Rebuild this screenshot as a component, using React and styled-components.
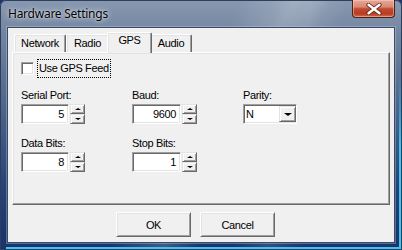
import React from "react";
import styled, { createGlobalStyle } from "styled-components";

const GlobalStyle = createGlobalStyle`
  html, body { margin: 0; padding: 0; background: #1b3366; }
  * { box-sizing: border-box; }
`;

const UI_FONT = `"Liberation Sans", Arial, sans-serif`;

/* ---------- window chrome ---------- */
const Window = styled.div`
  width: 402px;
  height: 250px;
  display: flex;
  flex-direction: column;
  position: relative;
  overflow: hidden;
  border-radius: 6px 6px 0 0;
  background:
    linear-gradient(118deg, transparent 45%, rgba(255,255,255,0.18) 55%, transparent 62%),
    linear-gradient(100deg, transparent 62%, rgba(255,255,255,0.12) 70%, transparent 78%),
    linear-gradient(180deg, #8898b0 0%, #71849f 14%, #4b6289 45%, #264277 75%, #1a336a 100%);
  box-shadow: inset 0 0 0 1px #2d3f5c;

  &::after {
    content: "";
    position: absolute;
    right: 1px;
    bottom: 1px;
    width: 2px;
    height: 70%;
    background: linear-gradient(180deg, transparent, #36c6f4 40%);
  }
  &::before {
    content: "";
    position: absolute;
    left: 6px;
    right: 1px;
    bottom: 1px;
    height: 2px;
    background: #36c6f4;
  }
`;

const TitleBar = styled.div`
  height: 27px;
  display: flex;
  align-items: flex-start;
  padding-left: 8px;
  flex-shrink: 0;
`;

const Title = styled.div`
  font-family: "Noto Sans", "Open Sans", sans-serif;
  font-size: 12px;
  letter-spacing: -0.25px;
  line-height: 16px;
  margin-top: 6px;
  color: #000;
  text-shadow: 0 0 6px rgba(255,255,255,0.9), 0 0 2px rgba(255,255,255,0.7);
`;

const CloseButton = styled.div`
  margin-left: auto;
  margin-right: 7px;
  width: 43px;
  height: 18px;
  border: 1px solid #4a2018;
  border-top: none;
  border-radius: 0 0 4px 4px;
  background: linear-gradient(180deg, #e6a797 0%, #d98a75 40%, #c24a2f 52%, #b83c22 80%, #cf6a4a 100%);
  box-shadow: inset 0 0 0 1px rgba(255,220,210,0.45);
  display: flex;
  align-items: center;
  justify-content: center;
`;

const Frame = styled.div`
  flex: 1;
  padding: 0 7px 7px 7px;
  display: flex;
`;

const Client = styled.div`
  flex: 1;
  background: #f0f0f0;
  border: 1px solid #3a4a62;
  box-shadow: 0 0 0 1px rgba(200,215,235,0.35);
  padding: 4px 4px 0 4px;
  display: flex;
  flex-direction: column;
  font-family: ${UI_FONT};
  font-size: 11px;
  letter-spacing: -0.35px;
  color: #000;
`;

/* ---------- tabs ---------- */
const TabStrip = styled.div`
  display: flex;
  align-items: flex-end;
  height: 20px;
  padding-left: 2px;
  position: relative;
  z-index: 1;
`;

const Tab = styled.div`
  width: ${(p) => p.$w}px;
  height: ${(p) => (p.$active ? 21 : 18)}px;
  margin: ${(p) => (p.$active ? "0 -2px -1px -2px" : "0")};
  background: #f0f0f0;
  border-left: 1px solid #fff;
  border-top: 1px solid #fff;
  border-right: 1px solid #696969;
  box-shadow: inset -1px 0 0 #a0a0a0, inset 1px 1px 0 #e3e3e3;
  border-radius: 2px 2px 0 0;
  text-align: center;
  line-height: ${(p) => (p.$active ? 15 : 16)}px;
  position: relative;
  z-index: ${(p) => (p.$active ? 2 : 1)};
`;

const Panel = styled.div`
  height: 153px;
  border-top: 1px solid #fff;
  border-left: 1px solid #fff;
  border-right: 1px solid #696969;
  border-bottom: 1px solid #696969;
  box-shadow: inset -1px -1px 0 #a0a0a0, inset 1px 1px 0 #e3e3e3;
  padding: 6px 8px 0 8px;
`;

/* ---------- controls ---------- */
const CheckRow = styled.div`
  display: flex;
  align-items: center;
  height: 18px;
  gap: 3px;
`;

const CheckBox = styled.div`
  width: 13px;
  height: 13px;
  background: #fff;
  border-top: 1px solid #a0a0a0;
  border-left: 1px solid #a0a0a0;
  border-right: 1px solid #fff;
  border-bottom: 1px solid #fff;
  box-shadow: inset 1px 1px 0 #696969, inset -1px -1px 0 #e3e3e3;
`;

const FocusLabel = styled.span`
  border: 1px dotted #000;
  padding: 2px 1px 2px 1px;
  line-height: 13px;
`;

const FieldGrid = styled.div`
  display: grid;
  grid-template-columns: 111px 111px auto;
  row-gap: 13px;
  margin-top: 12px;
`;

const Field = styled.div`
  display: flex;
  flex-direction: column;
`;

const Label = styled.div`
  height: 13px;
  line-height: 13px;
  margin-bottom: 2px;
`;

const SpinWrap = styled.div`
  display: flex;
  gap: 1px;
`;

const Sunken = styled.div`
  width: ${(p) => p.$w}px;
  height: 20px;
  background: #fff;
  border-top: 1px solid #a0a0a0;
  border-left: 1px solid #a0a0a0;
  border-right: 1px solid #fff;
  border-bottom: 1px solid #fff;
  box-shadow: inset 1px 1px 0 #696969, inset -1px -1px 0 #e3e3e3;
  display: flex;
  align-items: center;
  justify-content: ${(p) => (p.$right ? "flex-end" : "flex-start")};
  padding: ${(p) => (p.$right ? "0 4px 0 0" : "0 0 0 2px")};
  line-height: 13px;
`;

const SpinButtons = styled.div`
  width: 15px;
  height: 20px;
  display: flex;
  flex-direction: column;
`;

const Raised = styled.div`
  flex: 1;
  background: #f0f0f0;
  border-top: 1px solid #e3e3e3;
  border-left: 1px solid #e3e3e3;
  border-right: 1px solid #696969;
  border-bottom: 1px solid #696969;
  box-shadow: inset 1px 1px 0 #fff, inset -1px -1px 0 #a0a0a0;
  display: flex;
  align-items: center;
  justify-content: center;
`;

const Arrow = styled.div`
  width: 0;
  height: 0;
  border-left: ${(p) => p.$size}px solid transparent;
  border-right: ${(p) => p.$size}px solid transparent;
  ${(p) =>
    p.$up
      ? `border-bottom: ${p.$size - 1}px solid #000;`
      : `border-top: ${p.$size - 1}px solid #000;`}
`;

const DropButton = styled(Raised)`
  flex: none;
  width: 17px;
  height: 16px;
  margin-left: auto;
`;

/* ---------- dialog buttons ---------- */
const ButtonRow = styled.div`
  display: flex;
  justify-content: center;
  gap: 9px;
  margin-top: 7px;
  padding-right: 11px;
`;

const PushButton = styled.div`
  width: 75px;
  height: 25px;
  background: #f0f0f0;
  border-top: 1px solid #fff;
  border-left: 1px solid #fff;
  border-right: 1px solid #696969;
  border-bottom: 1px solid #696969;
  box-shadow: inset 1px 1px 0 #e3e3e3, inset -1px -1px 0 #a0a0a0;
  display: flex;
  align-items: center;
  justify-content: center;
`;

function SpinEdit({ label, value, w = 48 }) {
  return (
    <Field>
      <Label>{label}</Label>
      <SpinWrap>
        <Sunken $w={w} $right>{value}</Sunken>
        <SpinButtons>
          <Raised><Arrow $up $size={3} /></Raised>
          <Raised><Arrow $size={3} /></Raised>
        </SpinButtons>
      </SpinWrap>
    </Field>
  );
}

function Combo({ label, value }) {
  return (
    <Field>
      <Label>{label}</Label>
      <Sunken $w={54}>
        <span>{value}</span>
        <DropButton><Arrow $size={4} /></DropButton>
      </Sunken>
    </Field>
  );
}

const tabs = [
  { name: "Network", w: 52 },
  { name: "Radio", w: 43 },
  { name: "GPS", w: 45, active: true },
  { name: "Audio", w: 42 },
];

export default function App() {
  return (
    <>
      <GlobalStyle />
      <Window>
        <TitleBar>
          <Title>Hardware Settings</Title>
          <CloseButton>
            <svg width="16" height="12" viewBox="0 0 16 12">
              <path d="M2.5 1.8 L13.5 10.2 M13.5 1.8 L2.5 10.2" stroke="#6a2a1c" strokeWidth="4.2" strokeLinecap="round" />
              <path d="M2.5 1.8 L13.5 10.2 M13.5 1.8 L2.5 10.2" stroke="#fff" strokeWidth="2.4" strokeLinecap="round" />
            </svg>
          </CloseButton>
        </TitleBar>
        <Frame>
          <Client>
            <TabStrip>
              {tabs.map((t) => (
                <Tab key={t.name} $w={t.w} $active={t.active}>
                  {t.name}
                </Tab>
              ))}
            </TabStrip>
            <Panel>
              <CheckRow>
                <CheckBox />
                <FocusLabel>Use GPS Feed</FocusLabel>
              </CheckRow>
              <FieldGrid>
                <SpinEdit label="Serial Port:" value="5" />
                <SpinEdit label="Baud:" value="9600" w={49} />
                <Combo label="Parity:" value="N" />
                <SpinEdit label="Data Bits:" value="8" />
                <SpinEdit label="Stop Bits:" value="1" w={49} />
              </FieldGrid>
            </Panel>
            <ButtonRow>
              <PushButton>OK</PushButton>
              <PushButton>Cancel</PushButton>
            </ButtonRow>
          </Client>
        </Frame>
      </Window>
    </>
  );
}
